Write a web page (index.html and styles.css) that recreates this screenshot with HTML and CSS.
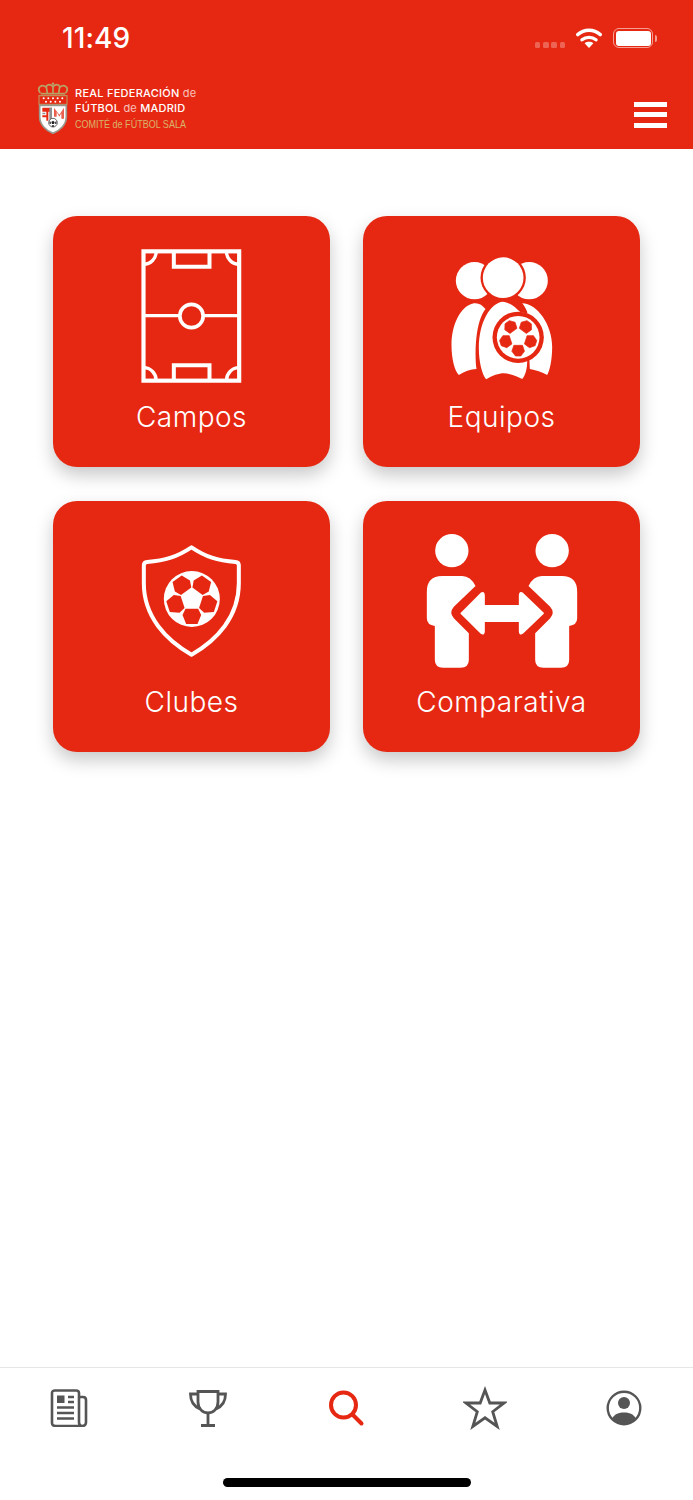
FILE: index.html
```html
<!DOCTYPE html>
<html lang="es">
<head>
<meta charset="utf-8">
<title>Buscar</title>
<link rel="stylesheet" href="styles.css">
</head>
<body>
<div class="phone">
  <header class="header">
    <div class="status">
      <span class="time">11:49</span>
      <div class="status-right">
        <div class="dots"><i></i><i></i><i></i><i></i></div>
        <svg class="wifi" width="26" height="20" viewBox="0 0 26 20"><path d="M1.8 6.500C8 .8 18 .8 24.200 6.500" fill="none" stroke="#fff" stroke-width="3.600" stroke-linecap="round"/><path d="M6 11.800c4-3.300 10-3.300 14 0" fill="none" stroke="#fff" stroke-width="3.400" stroke-linecap="round"/><path d="M13 20l-4.400-4.800c2.600-1.900 6.200-1.900 8.800 0z" fill="#fff"/></svg>
        <div class="battery"><div class="battery-fill"></div></div>
        <div class="battery-cap"></div>
      </div>
    </div>
    <div class="brand-row">
      <div class="brand">
        <svg class="crest" width="30" height="52" viewBox="0 0 90 156">
          <g fill="none" stroke="#b9a268" stroke-width="5">
            <path d="M7 33C-6 16 12 5 24 15C28 5 38 6 45 14C52 6 62 5 66 15C78 5 96 16 83 33"/>
            <path d="M25 15L28 33M65 15L62 33M45 14V33"/>
            <path d="M8 35H82"/>
          </g>
          <circle cx="45" cy="5" r="3.500" fill="#b9a268"/>
          <rect x="3" y="41" width="84" height="26" fill="#e62812" stroke="#b9a268" stroke-width="3"/>
          <g fill="#fff"><circle cx="17" cy="49" r="3"/><circle cx="31" cy="49" r="3"/><circle cx="45" cy="49" r="3"/><circle cx="59" cy="49" r="3"/><circle cx="73" cy="49" r="3"/><circle cx="24" cy="59" r="3"/><circle cx="38" cy="59" r="3"/><circle cx="52" cy="59" r="3"/><circle cx="66" cy="59" r="3"/></g>
          <path d="M5 70H85V104C85 128 66 146 45 154C24 146 5 128 5 104Z" fill="#fff" stroke="#9a988c" stroke-width="5"/>
          <path d="M13 77H42V89H13ZM13 100H25V89H31V116H25V106H13Z" fill="#e62812"/>
          <path d="M13 92H22V97H13ZM34 77H42V116H34Z" fill="#8f8f8f"/>
          <path d="M48 77L64 98L78 77V110H70V94L64 104L56 90V104H48Z" fill="#e9604f"/>
          <circle cx="45" cy="122" r="13" fill="#fff" stroke="#222" stroke-width="2"/>
          <path d="M45 116l5 4-2 6h-6l-2-6z" fill="#222"/>
          <path d="M34 118l4 1 1 6-4 1zM56 118l-4 1-1 6 4 1zM41 131l4-2 4 2-1 3h-6z" fill="#222"/>
        </svg>
        <div class="brand-text">
          <div class="brand-line">REAL FEDERACIÓN <span class="brand-de">de</span></div>
          <div class="brand-line">FÚTBOL <span class="brand-de">de</span> MADRID</div>
          <div class="brand-sub">COMITÉ de FÚTBOL SALA</div>
        </div>
      </div>
      <div class="menu"><i></i><i></i><i></i></div>
    </div>
  </header>

  <main class="main">
    <div class="grid">
      <a class="card">
        <svg class="card-icon" width="160" height="134" viewBox="214.500 132 480 402">
          <g fill="none" stroke="#fff">
            <rect x="309" y="139" width="287" height="388" stroke-width="12.500"/>
            <path d="M309 332H415M491 332H596" stroke-width="10"/>
            <circle cx="453" cy="333" r="35" stroke-width="11"/>
            <path d="M400 139V185H507V139M400 527V481H507V527" stroke-width="12"/>
            <path d="M347 139A38 38 0 0 1 309 178M558 139A38 38 0 0 0 596 178M347 527A38 38 0 0 0 309 488M558 527A38 38 0 0 1 596 488" stroke-width="10"/>
          </g>
        </svg>
        <span class="card-label">Campos</span>
      </a>
      <a class="card">
        <svg class="card-icon" width="160" height="134" viewBox="214.500 132 480 402">
          <defs>
            <polygon id="patch-a" points="-13,-24 13,-24 19,-42 8,-56 -8,-56 -19,-42" fill="#e62812" stroke="#e62812" stroke-width="2" stroke-linejoin="round"/>
          </defs>
          <circle cx="372" cy="227" r="56" fill="#fff"/>
          <circle cx="536" cy="227" r="56" fill="#fff"/>
          <circle cx="458" cy="218" r="68" fill="#e62812"/>
          <circle cx="458" cy="218" r="61" fill="#fff"/>
          <path d="M370 295C330 302 303 360 303 420C303 460 312 498 325 510C340 500 360 493 378 492C372 440 375 350 405 312C395 300 385 293 370 295Z" fill="#fff"/>
          <path d="M515 295C560 295 605 360 605 425C605 465 598 495 590 510C575 502 555 495 538 492L530 320C525 310 520 300 515 295Z" fill="#fff"/>
          <path d="M455 290C420 295 385 350 385 430C385 470 395 510 407 523C425 512 445 505 460 505C480 505 500 515 515 522C525 510 530 490 530 470L560 330L510 322C495 308 480 292 455 290Z" fill="#fff"/>
          <circle cx="503" cy="397" r="77" fill="#e62812"/>
          <circle cx="503" cy="397" r="64" fill="#fff"/>
          <g transform="translate(503 397)">
            <use href="#patch-a" transform="rotate(-36)"/><use href="#patch-a" transform="rotate(36)"/><use href="#patch-a" transform="rotate(108)"/><use href="#patch-a" transform="rotate(180)"/><use href="#patch-a" transform="rotate(252)"/>
          </g>
        </svg>
        <span class="card-label">Equipos</span>
      </a>
      <a class="card">
        <svg class="card-icon" width="160" height="134" viewBox="214.500 132 480 402">
          <defs>
            <polygon id="patch-b" points="-19,-29 19,-29 28,-48 17,-75 -17,-75 -28,-48" fill="#e62812"/>
          </defs>
          <path d="M453 172C495 200 530 212 585 216Q595 217 595 226V280C595 380 530 450 453 494C376 450 310 380 310 280V226Q310 217 320 216C375 212 410 200 453 172Z" fill="none" stroke="#fff" stroke-width="12" stroke-linejoin="round"/>
          <circle cx="454" cy="327" r="84" fill="#fff"/>
          <g transform="translate(454 327)">
            <use href="#patch-b" transform="rotate(-36)"/><use href="#patch-b" transform="rotate(36)"/><use href="#patch-b" transform="rotate(108)"/><use href="#patch-b" transform="rotate(180)"/><use href="#patch-b" transform="rotate(252)"/>
          </g>
        </svg>
        <span class="card-label">Clubes</span>
      </a>
      <a class="card">
        <svg class="card-icon" width="160" height="134" viewBox="214.500 132 480 402">
          <defs>
            <path id="person" d="M275 258H335Q360 258 375 288L310 350Q295 367 310 385L355 430V510Q355 533 330 533H278Q253 533 253 510V408Q229 405 229 385V305Q229 258 275 258Z" fill="#fff"/>
          </defs>
          <circle cx="304" cy="182" r="50" fill="#fff"/>
          <circle cx="605" cy="182" r="50" fill="#fff"/>
          <use href="#person"/>
          <use href="#person" transform="translate(909 0) scale(-1 1)"/>
          <path d="M333 370L392 311Q400 305 400 316V348H508V316Q508 305 516 311L577 370L516 428Q508 435 508 424V393H400V424Q400 435 392 428Z" fill="#fff" stroke="#fff" stroke-width="6" stroke-linejoin="round"/>
        </svg>
        <span class="card-label">Comparativa</span>
      </a>
    </div>
  </main>

  <footer class="tabbar">
    <div class="tabs">
      <a class="tab">
        <svg width="38" height="38" viewBox="0 0 38 38" fill="none" stroke="#555" stroke-width="2.600">
          <path d="M29 8H33Q36 8 36 11V33Q36 37 32 37H6Q2 37 2 34V4Q2 1.500 5 1.500H26Q29 1.500 29 4V33Q29 37 32 37"/>
          <rect x="7" y="6.500" width="7.500" height="7.500" fill="#555" stroke="none"/>
          <path d="M18 8H24M18 13H24M7 18.500H24M7 24H24M7 29.500H24"/>
        </svg>
      </a>
      <a class="tab">
        <svg width="38" height="38" viewBox="0 0 38 38" fill="none" stroke="#555" stroke-width="2.800">
          <path d="M9 2.500H29V13C29 20 24 24 19 24C14 24 9 20 9 13Z"/>
          <path d="M9 5H1.500C1.500 12 4 17 11 20M29 5H36.500C36.500 12 34 17 27 20"/>
          <path d="M19 24V36M12 36.500H26"/>
        </svg>
      </a>
      <a class="tab">
        <svg width="38" height="38" viewBox="0 0 38 38" fill="none" stroke="#e62812" stroke-width="4" stroke-linecap="round">
          <circle cx="16.500" cy="16" r="12.500"/>
          <path d="M26 26L34.500 34.500"/>
        </svg>
      </a>
      <a class="tab">
        <svg width="44" height="44" viewBox="0 0 44 44" fill="none" stroke="#555" stroke-width="2.800" stroke-linejoin="miter">
          <path d="M22 4L26.800 17H41L29.700 25.700L34.200 40.500L22 31.800L9.800 40.500L14.300 25.700L3 17H17.200Z"/>
        </svg>
      </a>
      <a class="tab">
        <svg width="38" height="38" viewBox="0 0 38 38">
          <circle cx="19" cy="19" r="16.300" fill="none" stroke="#555" stroke-width="2.400"/>
          <circle cx="19" cy="14" r="6" fill="#555"/>
          <path d="M7 29.500C9.500 25 14 23.500 19 23.500C24 23.500 28.500 25 31 29.500C28 33.200 23.700 35 19 35C14.300 35 10 33.200 7 29.500Z" fill="#555"/>
        </svg>
      </a>
    </div>
    <div class="home-indicator"></div>
  </footer>
</div>
</body>
</html>
```
FILE: styles.css
```css
* { box-sizing: border-box; }
html, body { margin: 0; padding: 0; background: #fff; }
.phone {
  width: 693px;
  height: 1500px;
  display: flex;
  flex-direction: column;
  overflow: hidden;
  font-family: "Inter", "Liberation Sans", sans-serif;
}
.header {
  height: 149px;
  background: #e62812;
  color: #fff;
  padding: 0 26px 0 38px;
  flex: none;
}
.status {
  height: 76px;
  display: flex;
  justify-content: space-between;
  align-items: flex-start;
  padding: 22px 0 0 24px;
  margin-right: 10px;
}
.time {
  font-size: 28px;
  font-weight: 500;
  line-height: 32px;
  letter-spacing: 0.1px;
}
.status-right {
  display: flex;
  align-items: flex-start;
  padding-top: 6px;
}
.dots {
  display: flex;
  gap: 2.700px;
  margin: 14px 11px 0 0;
}
.dots i {
  width: 5.500px;
  height: 5.500px;
  border-radius: 1.500px;
  background: rgba(255, 255, 255, 0.28);
}
.wifi { margin-right: 11px; }
.battery {
  width: 40px;
  height: 20px;
  border: 1.500px solid rgba(255, 255, 255, 0.55);
  border-radius: 6px;
  padding: 1.500px;
}
.battery-fill {
  height: 100%;
  background: #fff;
  border-radius: 3px;
}
.battery-cap {
  width: 2px;
  height: 7px;
  margin: 6.500px 0 0 2px;
  background: rgba(255, 255, 255, 0.55);
  border-radius: 0 2px 2px 0;
}
.brand-row {
  display: flex;
  justify-content: space-between;
  align-items: flex-start;
}
.brand {
  display: flex;
  gap: 7px;
  margin-top: 6px;
}
.brand-text { padding-top: 4px; }
.brand-line {
  font-size: 11px;
  line-height: 15px;
  font-weight: 500;
  letter-spacing: 0.25px;
  white-space: nowrap;
}
.brand-de { font-weight: 400; opacity: 0.7; }
.brand-sub {
  font-family: "Liberation Sans", sans-serif;
  font-size: 11px;
  line-height: 13px;
  margin-top: 2px;
  color: #d9b36a;
  white-space: nowrap;
  transform: scaleX(0.82);
  transform-origin: left center;
}
.menu {
  display: flex;
  flex-direction: column;
  gap: 5.300px;
  margin-top: 26px;
}
.menu i {
  display: block;
  width: 33px;
  height: 5px;
  background: #fff;
}
.main {
  flex: 1;
  padding: 67px 53px 0;
}
.grid {
  display: grid;
  grid-template-columns: 277px 277px;
  grid-auto-rows: 251px;
  gap: 34px 33px;
}
.card {
  background: #e62812;
  border-radius: 24px;
  box-shadow: 0 8px 18px rgba(0, 0, 0, 0.22);
  padding-top: 33px;
  display: flex;
  flex-direction: column;
  align-items: center;
  color: #fff;
}
.card-icon { display: block; flex: none; }
.card-label {
  font-family: "Inter", sans-serif;
  font-size: 28px;
  font-weight: 300;
  line-height: 34px;
  margin-top: 17px;
  letter-spacing: 0.5px;
}
.tabbar {
  height: 133px;
  flex: none;
  border-top: 1px solid #e6e6e6;
  display: flex;
  flex-direction: column;
  align-items: center;
}
.tabs {
  width: 100%;
  height: 110px;
  display: grid;
  grid-template-columns: repeat(5, 1fr);
  align-items: start;
}
.tab {
  display: flex;
  justify-content: center;
  height: 80px;
  align-items: center;
}
.home-indicator {
  width: 248px;
  height: 9px;
  border-radius: 5px;
  background: #000;
}
```
